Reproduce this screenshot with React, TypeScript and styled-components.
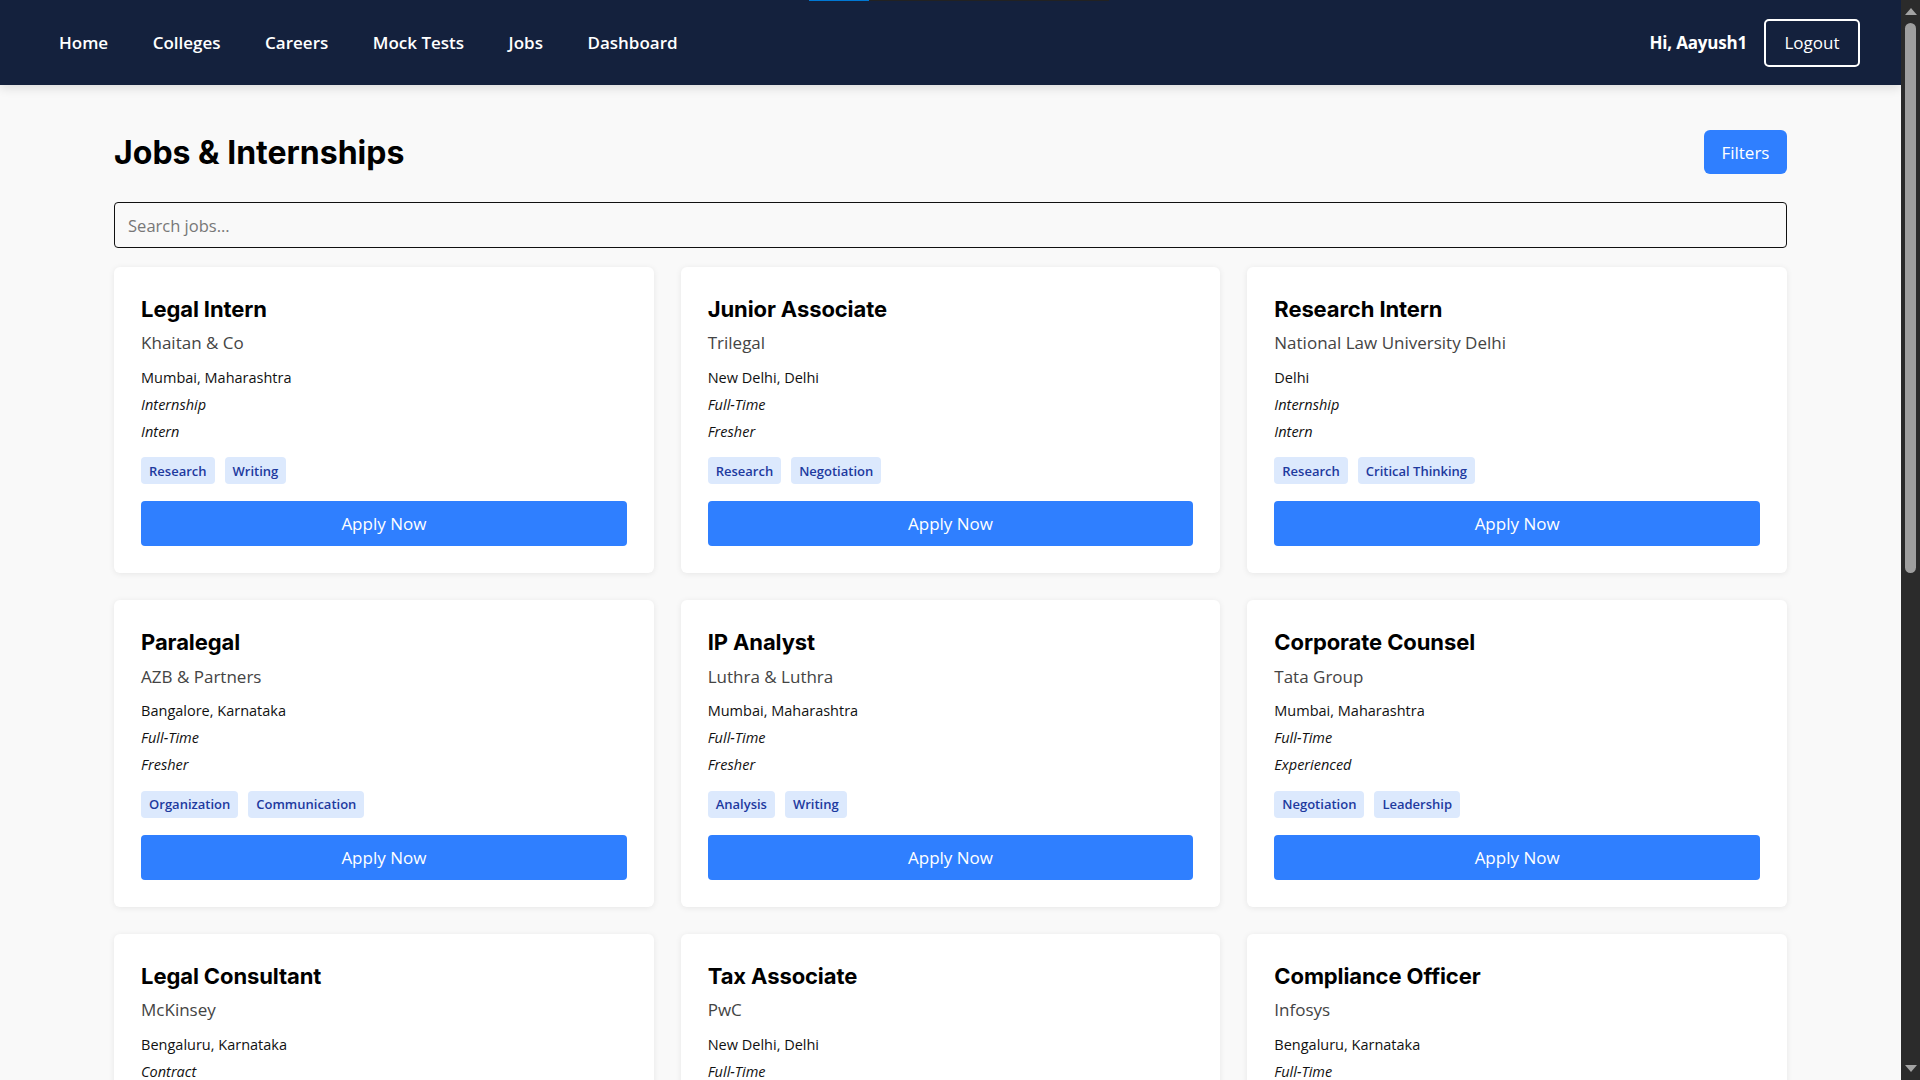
import { FC } from 'react';
import styled, { createGlobalStyle } from 'styled-components';

const GlobalStyle = createGlobalStyle`
  body {
    margin: 0 19px 0 0;
    background: #f9f9f9;
    color: #111;
    font-family: 'Open Sans', 'Noto Sans', sans-serif;
  }
  * {
    box-sizing: border-box;
  }
`;

// browser scrollbar as seen in the screenshot (dark theme)
const ScrollTrack = styled.div`
  position: fixed;
  top: 0;
  right: 0;
  width: 19px;
  height: 100vh;
  background: #2b2b2b;
  z-index: 50;
`;

const ScrollArrow = styled.div<{ $down?: boolean }>`
  position: absolute;
  left: 4px;
  ${({ $down }) => ($down ? 'bottom: 8px;' : 'top: 8px;')}
  width: 0;
  height: 0;
  border-left: 6px solid transparent;
  border-right: 6px solid transparent;
  ${({ $down }) =>
    $down ? 'border-top: 7px solid #a3a3a3;' : 'border-bottom: 7px solid #a3a3a3;'}
`;

const ScrollThumb = styled.div`
  position: absolute;
  top: 23px;
  left: 4px;
  width: 11px;
  height: 550px;
  border-radius: 6px;
  background: #9f9f9f;
`;

const Nav = styled.nav`
  position: relative;
  height: 85px;
  background: #14213d;
  display: flex;
  align-items: center;
  justify-content: space-between;
  padding: 0 41px 0 59px;
  box-shadow: 0 3px 10px rgba(0, 0, 0, 0.12);
`;

const LoadBar = styled.div`
  position: absolute;
  top: 0;
  left: 809px;
  width: 300px;
  height: 1px;
  background: linear-gradient(to right, #0078d4 0 60px, #222 60px);
`;

const NavLinks = styled.div`
  display: flex;
  gap: 44.5px;
`;

const NavLink = styled.a`
  color: #fff;
  font-size: 17px;
  font-weight: 600;
  text-decoration: none;
`;

const UserBox = styled.div`
  display: flex;
  align-items: center;
  gap: 17px;
`;

const Greeting = styled.span`
  color: #fff;
  font-size: 17px;
  font-weight: 700;
  letter-spacing: -0.2px;
`;

const OutlineButton = styled.button`
  width: 96px;
  height: 48px;
  background: transparent;
  color: #fff;
  border: 2px solid #fff;
  border-radius: 5px;
  font-family: inherit;
  font-size: 17px;
`;

const Main = styled.main`
  width: 88%;
  margin: 0 auto;
  padding: 45px 0 200px;
`;

const HeaderRow = styled.div`
  display: flex;
  align-items: center;
  justify-content: space-between;
  height: 44px;
`;

const PageTitle = styled.h1`
  margin: 0;
  font-family: Inter, sans-serif;
  font-size: 32px;
  font-weight: 700;
  color: #000;
`;

const PrimaryButton = styled.button<{ $block?: boolean }>`
  background: #2f7fff;
  color: #fff;
  border: none;
  border-radius: ${({ $block }) => ($block ? '4px' : '6px')};
  font-family: inherit;
  font-size: 17px;
  height: ${({ $block }) => ($block ? '45px' : '44px')};
  width: ${({ $block }) => ($block ? '100%' : '83px')};
  display: block;
`;

const SearchInput = styled.input`
  display: block;
  width: 100%;
  height: 46px;
  margin-top: 28px;
  padding: 0 13px;
  border: 1.5px solid #111;
  border-radius: 4px;
  background: #f9f9f9;
  color: #111;
  font-family: inherit;
  font-size: 16.5px;
  outline: none;
  &::placeholder {
    color: #777;
  }
`;

const Grid = styled.div`
  display: grid;
  grid-template-columns: repeat(3, 1fr);
  gap: 27px;
  margin-top: 19px;
`;

const Card = styled.div`
  background: #fff;
  border-radius: 6px;
  box-shadow: 0 1px 6px rgba(0, 0, 0, 0.08);
  padding: 29px 27px 27px;
`;

const JobTitle = styled.h3`
  margin: 0;
  font-family: Inter, sans-serif;
  font-size: 22px;
  font-weight: 700;
  line-height: 1.2;
  letter-spacing: -0.1px;
  color: #000;
`;

const Company = styled.p`
  margin: 8px 0 11px;
  font-size: 17px;
  line-height: 1.5;
  color: #444;
`;

const Meta = styled.p<{ $italic?: boolean }>`
  margin: 0 0 4.5px;
  font-size: 14.5px;
  line-height: 22.5px;
  color: #111;
  font-style: ${({ $italic }) => ($italic ? 'italic' : 'normal')};
`;

const Tags = styled.div`
  display: flex;
  gap: 10px;
  margin: 14px 0 17px;
`;

const Tag = styled.span`
  height: 27px;
  padding: 0 8px;
  display: inline-flex;
  align-items: center;
  background: #dce9fd;
  color: #1e3a9f;
  border-radius: 4px;
  font-size: 13px;
  font-weight: 600;
`;

type Job = {
  title: string;
  company: string;
  location: string;
  type: string;
  level: string;
  tags: string[];
};

const jobs: Job[] = [
  { title: 'Legal Intern', company: 'Khaitan & Co', location: 'Mumbai, Maharashtra', type: 'Internship', level: 'Intern', tags: ['Research', 'Writing'] },
  { title: 'Junior Associate', company: 'Trilegal', location: 'New Delhi, Delhi', type: 'Full-Time', level: 'Fresher', tags: ['Research', 'Negotiation'] },
  { title: 'Research Intern', company: 'National Law University Delhi', location: 'Delhi', type: 'Internship', level: 'Intern', tags: ['Research', 'Critical Thinking'] },
  { title: 'Paralegal', company: 'AZB & Partners', location: 'Bangalore, Karnataka', type: 'Full-Time', level: 'Fresher', tags: ['Organization', 'Communication'] },
  { title: 'IP Analyst', company: 'Luthra & Luthra', location: 'Mumbai, Maharashtra', type: 'Full-Time', level: 'Fresher', tags: ['Analysis', 'Writing'] },
  { title: 'Corporate Counsel', company: 'Tata Group', location: 'Mumbai, Maharashtra', type: 'Full-Time', level: 'Experienced', tags: ['Negotiation', 'Leadership'] },
  { title: 'Legal Consultant', company: 'McKinsey', location: 'Bengaluru, Karnataka', type: 'Contract', level: 'Experienced', tags: ['Advisory', 'Strategy'] },
  { title: 'Tax Associate', company: 'PwC', location: 'New Delhi, Delhi', type: 'Full-Time', level: 'Fresher', tags: ['Taxation', 'Analysis'] },
  { title: 'Compliance Officer', company: 'Infosys', location: 'Bengaluru, Karnataka', type: 'Full-Time', level: 'Experienced', tags: ['Compliance', 'Regulation'] },
];

const JobCard: FC<{ job: Job }> = ({ job }) => (
  <Card>
    <JobTitle>{job.title}</JobTitle>
    <Company>{job.company}</Company>
    <Meta>{job.location}</Meta>
    <Meta $italic>{job.type}</Meta>
    <Meta $italic>{job.level}</Meta>
    <Tags>
      {job.tags.map((t) => (
        <Tag key={t}>{t}</Tag>
      ))}
    </Tags>
    <PrimaryButton $block>Apply Now</PrimaryButton>
  </Card>
);

const App: FC = () => {
  const links = ['Home', 'Colleges', 'Careers', 'Mock Tests', 'Jobs', 'Dashboard'];
  return (
    <>
      <GlobalStyle />
      <Nav>
        <LoadBar />
        <NavLinks>
          {links.map((l) => (
            <NavLink key={l} href="#">
              {l}
            </NavLink>
          ))}
        </NavLinks>
        <UserBox>
          <Greeting>Hi, Aayush1</Greeting>
          <OutlineButton>Logout</OutlineButton>
        </UserBox>
      </Nav>
      <Main>
        <HeaderRow>
          <PageTitle>Jobs &amp; Internships</PageTitle>
          <PrimaryButton>Filters</PrimaryButton>
        </HeaderRow>
        <SearchInput placeholder="Search jobs..." />
        <Grid>
          {jobs.map((j) => (
            <JobCard key={j.title} job={j} />
          ))}
        </Grid>
      </Main>
      <ScrollTrack>
        <ScrollArrow />
        <ScrollThumb />
        <ScrollArrow $down />
      </ScrollTrack>
    </>
  );
};

export default App;
